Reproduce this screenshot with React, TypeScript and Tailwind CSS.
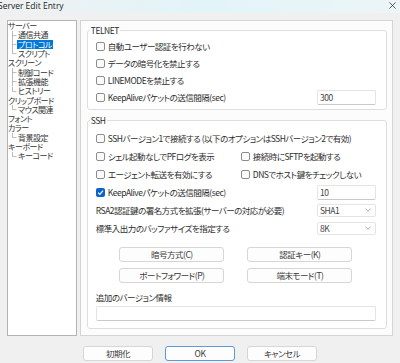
import React from "react";

const Checkbox = ({ checked = false }: { checked?: boolean }) =>
  checked ? (
    <span className="flex h-[9px] w-[9px] shrink-0 items-center justify-center rounded-[2px] bg-[#0a64c8]">
      <svg width="7" height="7" viewBox="0 0 8 8">
        <path d="M1.2 4.2 L3.2 6.1 L6.9 1.8" fill="none" stroke="white" strokeWidth="1.3" />
      </svg>
    </span>
  ) : (
    <span className="h-[9px] w-[9px] shrink-0 rounded-[2px] border border-[#8c8c8c] bg-[#fbfbfb]" />
  );

const CheckLabel = ({ label, checked }: { label: string; checked?: boolean }) => (
  <div className="flex items-center gap-[3px] whitespace-nowrap">
    <Checkbox checked={checked} />
    <span>{label}</span>
  </div>
);

const TextBox = ({ value }: { value: string }) => (
  <div className="flex h-[15px] w-[59px] items-center rounded-[2px] border border-[#e4e4e4] border-b-[#c9c9c9] bg-white pl-[2px] text-[#444]">
    {value}
  </div>
);

const SelectBox = ({ value }: { value: string }) => (
  <div className="flex h-[13px] w-[59px] items-center justify-between rounded-[2px] border border-[#e4e4e4] bg-white pl-[2px] pr-[4px] text-[#444]">
    <span>{value}</span>
    <svg width="6" height="4" viewBox="0 0 6 4">
      <path d="M0.5 0.8 L3 3.2 L5.5 0.8" fill="none" stroke="#8a8a8a" strokeWidth="0.8" />
    </svg>
  </div>
);

const Btn = ({ label, w = "w-[105px]", primary = false }: { label: string; w?: string; primary?: boolean }) => (
  <div
    className={`flex ${w} h-[15px] items-center justify-center rounded-[3px] border bg-[#fdfdfd] text-[#3a3a3a] ${
      primary ? "border-[#5e9ad6]" : "border-[#d6d6d6]"
    }`}
  >
    {label}
  </div>
);

type Node = { t: string; d: number; sel?: boolean; last?: boolean };
const tree: Node[] = [
  { t: "サーバー", d: 0 },
  { t: "通信共通", d: 1 },
  { t: "プロトコル", d: 1, sel: true },
  { t: "スクリプト", d: 1, last: true },
  { t: "スクリーン", d: 0 },
  { t: "制御コード", d: 1 },
  { t: "拡張機能", d: 1 },
  { t: "ヒストリー", d: 1, last: true },
  { t: "クリップボード", d: 0 },
  { t: "マウス関連", d: 1, last: true },
  { t: "フォント", d: 0 },
  { t: "カラー", d: 0 },
  { t: "背景設定", d: 1, last: true },
  { t: "キーボード", d: 0 },
  { t: "キーコード", d: 1, last: true },
];

export default function App() {
  return (
    <div className="h-[363px] w-[400px] overflow-hidden bg-[#f0f0f0] text-[8.5px] leading-none tracking-[-0.5px] text-[#2e2e2e] [font-family:'Noto_Sans_CJK_JP',sans-serif] [font-feature-settings:'palt']">
      {/* title bar */}
      <div className="flex h-[13px] items-start justify-between bg-linear-to-r from-[#eff1f2] via-[#e2f4f8] to-[#ecf5f7] pr-[4px] pt-[1px]">
        <span className="-ml-[2px] text-[8.5px] leading-[9px] tracking-normal text-[#222] [font-family:'Open_Sans',sans-serif]">
          Server Edit Entry
        </span>
        <svg width="7" height="7" viewBox="0 0 8 8" className="mt-[1px]">
          <path d="M0.5 0.5 L7.5 7.5 M7.5 0.5 L0.5 7.5" stroke="#333" strokeWidth="0.9" />
        </svg>
      </div>

      {/* body */}
      <div className="flex gap-[3px] px-[7px] pt-[7px]">
        {/* tree */}
        <div className="h-[316px] w-[70px] border border-[#b4b4b4] bg-white pt-[0.5px] text-[8px] text-[#333]">
          {tree.map((n, i) => (
            <div key={i} className="flex h-[9.3px] items-center whitespace-nowrap">
              {n.d === 1 && (
                <svg width="9" height="9.3" viewBox="0 0 9 9.3" className="shrink-0">
                  <path
                    d={n.last ? "M4.5 0 V4.6 H8.5" : "M4.5 0 V9.3 M4.5 4.6 H8.5"}
                    fill="none"
                    stroke="#a8a8a8"
                    strokeWidth="0.8"
                  />
                </svg>
              )}
              <span
                className={
                  n.sel
                    ? "flex h-[9.3px] items-center bg-[#0078d7] px-[1px] text-white"
                    : n.d === 0
                    ? ""
                    : "pl-[1px]"
                }
              >
                {n.t}
              </span>
            </div>
          ))}
        </div>

        {/* right panel */}
        <div className="h-[316px] w-[314px] border border-[#d4d4d4] bg-[#fcfcfc] pl-[6px] pr-[5px] pt-[5px]">
          <fieldset className="rounded-[3px] border border-[#dedede] bg-white">
            <legend className="ml-[2px] h-[9px] px-[1px] leading-[9px]">TELNET</legend>
            <div className="flex flex-col px-[8px] pr-[10px] pb-[3px] pt-[3px]">
              <div className="flex h-[17px] items-center"><CheckLabel label="自動ユーザー認証を行わない" /></div>
              <div className="flex h-[17px] items-center"><CheckLabel label="データの暗号化を禁止する" /></div>
              <div className="flex h-[17px] items-center"><CheckLabel label="LINEMODEを禁止する" /></div>
              <div className="flex h-[17px] items-center justify-between">
                <CheckLabel label="KeepAliveパケットの送信間隔(sec)" />
                <TextBox value="300" />
              </div>
            </div>
          </fieldset>

          <fieldset className="mt-[6px] rounded-[3px] border border-[#dedede] bg-white">
            <legend className="ml-[2px] h-[9px] px-[1px] leading-[9px]">SSH</legend>
            <div className="flex flex-col px-[8px] pr-[10px] pb-[7px] pt-[4px]">
              <div className="flex h-[18px] items-center">
                <CheckLabel label="SSHバージョン1で接続する (以下のオプションはSSHバージョン2で有効)" />
              </div>
              <div className="grid h-[18px] grid-cols-[145px_1fr] items-center">
                <CheckLabel label="シェル起動なしでPFログを表示" />
                <CheckLabel label="接続時にSFTPを起動する" />
              </div>
              <div className="grid h-[18px] grid-cols-[145px_1fr] items-center">
                <CheckLabel label="エージェント転送を有効にする" />
                <CheckLabel label="DNSでホスト鍵をチェックしない" />
              </div>
              <div className="flex h-[18px] items-center justify-between">
                <CheckLabel label="KeepAliveパケットの送信間隔(sec)" checked />
                <TextBox value="10" />
              </div>
              <div className="flex h-[18px] items-center justify-between">
                <span>RSA2認証鍵の署名方式を拡張(サーバーの対応が必要)</span>
                <SelectBox value="SHA1" />
              </div>
              <div className="flex h-[18px] items-center justify-between">
                <span>標準入出力のバッファサイズを指定する</span>
                <SelectBox value="8K" />
              </div>

              <div className="mt-[10px] flex justify-center gap-[23px]">
                <Btn label="暗号方式(C)" />
                <Btn label="認証キー(K)" />
              </div>
              <div className="mt-[6px] flex justify-center gap-[23px]">
                <Btn label="ポートフォワード(P)" />
                <Btn label="端末モード(T)" />
              </div>

              <div className="mt-[8px] flex h-[12px] items-center">追加のバージョン情報</div>
              <div className="mt-[3px] h-[15px] w-full rounded-[2px] border border-[#e4e4e4] border-b-[#c9c9c9] bg-white" />
            </div>
          </fieldset>
        </div>
      </div>

      {/* bottom buttons */}
      <div className="mt-[10px] flex justify-center gap-[12px]">
        <Btn label="初期化" w="w-[70px]" />
        <Btn label="OK" w="w-[70px]" primary />
        <Btn label="キャンセル" w="w-[70px]" />
      </div>
    </div>
  );
}
